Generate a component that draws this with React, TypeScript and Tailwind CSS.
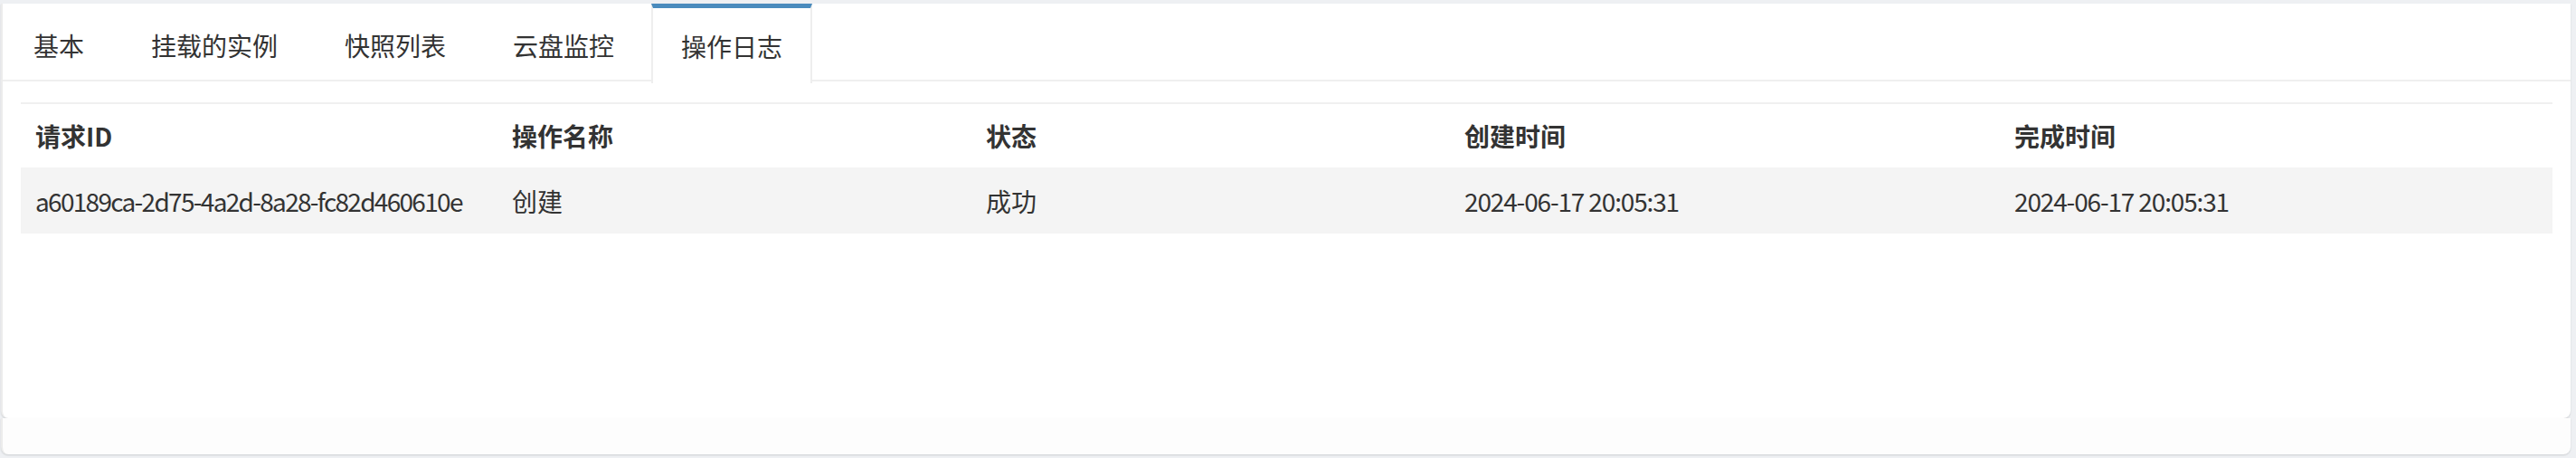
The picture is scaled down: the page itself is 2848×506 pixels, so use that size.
// App.tsx

const tabs = ["基本", "挂载的实例", "快照列表", "云盘监控", "操作日志"];

const rows = [
  {
    id: "a60189ca-2d75-4a2d-8a28-fc82d460610e",
    name: "创建",
    status: "成功",
    created: "2024-06-17 20:05:31",
    finished: "2024-06-17 20:05:31",
  },
];

export default function App() {
  return (
    <main
      className="min-h-[506px] bg-[#eef0f3] pt-[4px] pr-[6px] pb-[4px] pl-[1px] text-[#333]"
      style={{ fontFamily: '"Noto Sans CJK SC", "Noto Sans", sans-serif' }}
    >
      {/* Tabs + panel */}
      <section className="h-[458px] bg-white border-l-2 border-[#ececec] rounded-b-[8px] shadow-[0_1px_2px_rgba(0,0,0,0.14)]">
        <div className="flex h-[86px] border-b-2 border-[#efefef] pl-[1px]">
          {tabs.map((t, i) => {
            const active = i === tabs.length - 1;
            return (
              <div
                key={t}
                className={
                  active
                    ? "mr-[8px] h-[88px] flex items-center px-[31px] border-t-[5px] border-x-2 border-t-[#4a8bbd] border-x-[#eeeeee] bg-white text-[28px] leading-none"
                    : "mr-[8px] h-[86px] flex items-center px-[31px] border-t-[5px] border-x-2 border-transparent text-[28px] leading-none"
                }
              >
                {t}
              </div>
            );
          })}
        </div>

        <div className="px-[20px] pt-[23px]">
          <table className="w-full table-fixed border-t-2 border-[#f0f0f0] text-[28px]">
            <colgroup>
              <col className="w-[527px]" />
              <col className="w-[524px]" />
              <col className="w-[529px]" />
              <col className="w-[608px]" />
              <col />
            </colgroup>
            <thead>
              <tr className="h-[71px] text-left font-bold">
                <th className="px-[16px] font-bold">请求ID</th>
                <th className="px-[16px] font-bold">操作名称</th>
                <th className="px-[16px] font-bold">状态</th>
                <th className="px-[16px] font-bold">创建时间</th>
                <th className="px-[16px] font-bold">完成时间</th>
              </tr>
            </thead>
            <tbody>
              {rows.map((r) => (
                <tr key={r.id} className="h-[73px] bg-[#f4f4f4]">
                  <td className="px-[16px] whitespace-nowrap tracking-[-1.7px]">{r.id}</td>
                  <td className="px-[16px]">{r.name}</td>
                  <td className="px-[16px]">{r.status}</td>
                  <td className="px-[16px] whitespace-nowrap tracking-[-1.15px]">{r.created}</td>
                  <td className="px-[16px] whitespace-nowrap tracking-[-1.15px]">{r.finished}</td>
                </tr>
              ))}
            </tbody>
          </table>
        </div>
      </section>

      {/* Footer */}
      <div className="h-[40px] bg-[#fdfdfd] border-l-2 border-[#ececec] rounded-b-[8px] shadow-[0_1px_2px_rgba(0,0,0,0.14)]" />
    </main>
  );
}
